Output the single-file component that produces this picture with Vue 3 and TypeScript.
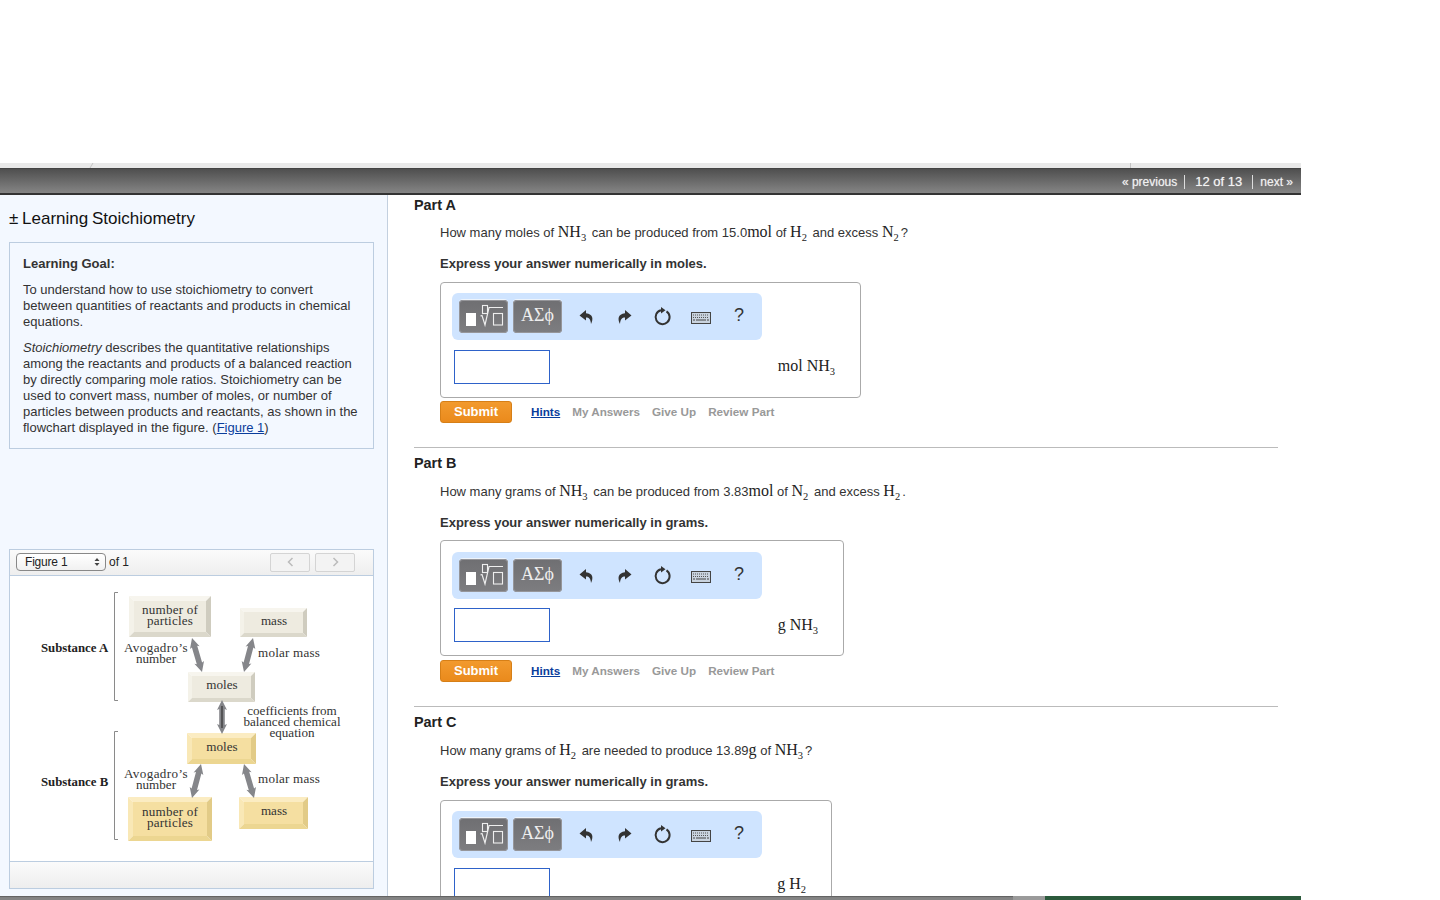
<script setup lang="ts">
// parts of the question, sub numbers are split out for the <sub> tag
const parts = [
  {
    id: "a",
    title: "Part A",
    question: [
      { t: "How many moles of " },
      { m: "NH", s: "3" },
      { t: " can be produced from 15.0" },
      { m: "mol" },
      { t: " of " },
      { m: "H", s: "2" },
      { t: " and excess " },
      { m: "N", s: "2" },
      { t: "?" },
    ],
    express: "Express your answer numerically in moles.",
    unit: "mol NH",
    unitSub: "3",
    actions: true,
  },
  {
    id: "b",
    title: "Part B",
    question: [
      { t: "How many grams of " },
      { m: "NH", s: "3" },
      { t: " can be produced from 3.83" },
      { m: "mol" },
      { t: " of " },
      { m: "N", s: "2" },
      { t: " and excess " },
      { m: "H", s: "2" },
      { t: "." },
    ],
    express: "Express your answer numerically in grams.",
    unit: "g NH",
    unitSub: "3",
    actions: true,
  },
  {
    id: "c",
    title: "Part C",
    question: [
      { t: "How many grams of " },
      { m: "H", s: "2" },
      { t: " are needed to produce 13.89" },
      { m: "g" },
      { t: " of " },
      { m: "NH", s: "3" },
      { t: "?" },
    ],
    express: "Express your answer numerically in grams.",
    unit: "g H",
    unitSub: "2",
    actions: false,
  },
];

const grey = { fill: "#eeebe0", top: "#f7f5ee", left: "#f4f2e9", right: "#cfccbf", bottom: "#dbd8cb" };
const yellow = { fill: "#f5dfa1", top: "#fbecc2", left: "#f9e8b6", right: "#e2cb87", bottom: "#ecd691" };

const boxes = [
  { x: 129, y: 596, w: 82, h: 41, b: 5, c: grey },
  { x: 240, y: 608, w: 67, h: 29, b: 4, c: grey },
  { x: 188, y: 672, w: 67, h: 30, b: 4, c: grey },
  { x: 187, y: 733, w: 69, h: 31, b: 5, c: yellow },
  { x: 128, y: 797, w: 84, h: 44, b: 5, c: yellow },
  { x: 239, y: 797, w: 69, h: 32, b: 5, c: yellow },
].map((r) => {
  const x2 = r.x + r.w;
  const y2 = r.y + r.h;
  const ix = r.x + r.b;
  const iy = r.y + r.b;
  const ix2 = x2 - r.b;
  const iy2 = y2 - r.b;
  return {
    ...r,
    ix,
    iy,
    iw: r.w - r.b * 2,
    ih: r.h - r.b * 2,
    topSide: `${r.x},${r.y} ${x2},${r.y} ${ix2},${iy} ${ix},${iy}`,
    leftSide: `${r.x},${r.y} ${ix},${iy} ${ix},${iy2} ${r.x},${y2}`,
    rightSide: `${x2},${r.y} ${ix2},${iy} ${ix2},${iy2} ${x2},${y2}`,
    bottomSide: `${r.x},${y2} ${ix},${iy2} ${ix2},${iy2} ${x2},${y2}`,
  };
});

// double headed arrow between two points
function arrow(x1: number, y1: number, x2: number, y2: number) {
  const len = Math.hypot(x2 - x1, y2 - y1);
  const ux = (x2 - x1) / len;
  const uy = (y2 - y1) / len;
  const nx = -uy;
  const ny = ux;
  const head = 10;
  const hw = 5;
  const sw = 2.8;
  const pt = (d: number, o: number) =>
    `${(x1 + ux * d + nx * o).toFixed(1)},${(y1 + uy * d + ny * o).toFixed(1)}`;
  return [
    pt(0, 0),
    pt(head, hw),
    pt(head - 1, sw),
    pt(len - head + 1, sw),
    pt(len - head, hw),
    pt(len, 0),
    pt(len - head, -hw),
    pt(len - head + 1, -sw),
    pt(head - 1, -sw),
    pt(head, -hw),
  ].join(" ");
}

const arrows = [
  arrow(192, 638, 202, 672),
  arrow(253, 638, 244, 672),
  arrow(222, 700, 222, 734),
  arrow(201, 764, 192, 798),
  arrow(244, 764, 254, 798),
];

const labels = [
  { x: 170, y: 614, t: "number of", c: "wide" },
  { x: 170, y: 625, t: "particles", c: "wide" },
  { x: 274, y: 625, t: "mass", c: "" },
  { x: 156, y: 652, t: "Avogadro’s", c: "avo" },
  { x: 156, y: 663, t: "number", c: "" },
  { x: 222, y: 689, t: "moles", c: "" },
  { x: 292, y: 715, t: "coefficients from", c: "" },
  { x: 292, y: 726, t: "balanced chemical", c: "" },
  { x: 292, y: 737, t: "equation", c: "" },
  { x: 222, y: 751, t: "moles", c: "" },
  { x: 156, y: 778, t: "Avogadro’s", c: "avo" },
  { x: 156, y: 789, t: "number", c: "" },
  { x: 170, y: 816, t: "number of", c: "wide" },
  { x: 170, y: 827, t: "particles", c: "wide" },
  { x: 274, y: 815, t: "mass", c: "" },
];
</script>

<template>
  <div class="page">
    <div class="frame">
      <div class="strip">
        <i class="tick tick-l"></i>
        <i class="tick tick-r"></i>
      </div>
      <div class="bar">
        <a class="nav-link">« previous</a>
        <span class="nav-count">12 of 13</span>
        <a class="nav-link nav-next">next »</a>
      </div>

      <div class="main">
        <aside class="side">
          <h1 class="side-title">± Learning Stoichiometry</h1>
          <div class="goal">
            <p class="goal-head">Learning Goal:</p>
            <p>To understand how to use stoichiometry to convert between quantities of reactants and products in chemical equations.</p>
            <p><em>Stoichiometry</em> describes the quantitative relationships among the reactants and products of a balanced reaction by directly comparing mole ratios. Stoichiometry can be used to convert mass, number of moles, or number of particles between products and reactants, as shown in the flowchart displayed in the figure. (<a class="fig-link">Figure 1</a>)</p>
          </div>

          <div class="figure">
            <div class="fig-bar">
              <div class="fig-select">
                <span>Figure 1</span>
                <svg width="6" height="10" viewBox="0 0 6 10"><path d="M3 1 5.5 4H.5zM3 9 .5 6h5z" fill="#444" /></svg>
              </div>
              <span class="fig-of">of 1</span>
              <div class="fig-navs">
                <button class="fig-nav">
                  <svg width="7" height="10" viewBox="0 0 7 10"><path d="M5.5 1 1.5 5l4 4" fill="none" stroke="#bbb" stroke-width="1.5" /></svg>
                </button>
                <button class="fig-nav">
                  <svg width="7" height="10" viewBox="0 0 7 10"><path d="M1.5 1l4 4-4 4" fill="none" stroke="#bbb" stroke-width="1.5" /></svg>
                </button>
              </div>
            </div>
            <div class="fig-body">
              <svg class="chart" width="363" height="286" viewBox="10 576 363 286">
                <path d="M118 592.500H114.500V700.500H118M118 731.500H114.500V839.500H118" fill="none" stroke="#8a8a8a" />
                <g v-for="(b, i) in boxes" :key="i">
                  <rect :x="b.ix" :y="b.iy" :width="b.iw" :height="b.ih" :fill="b.c.fill" />
                  <polygon :points="b.topSide" :fill="b.c.top" />
                  <polygon :points="b.leftSide" :fill="b.c.left" />
                  <polygon :points="b.rightSide" :fill="b.c.right" />
                  <polygon :points="b.bottomSide" :fill="b.c.bottom" />
                </g>
                <polygon v-for="(a, i) in arrows" :key="i" :points="a" fill="#85868a" />
                <line x1="222" y1="706" x2="222" y2="728" stroke="#333" stroke-width="1.2" />
                <text v-for="(l, i) in labels" :key="i" class="lbl" :class="l.c" :x="l.x" :y="l.y" text-anchor="middle">{{ l.t }}</text>
                <text class="lbl wide" x="258" y="657">molar mass</text>
                <text class="lbl wide" x="258" y="783">molar mass</text>
                <text class="lbl-b" x="41" y="652">Substance A</text>
                <text class="lbl-b" x="41" y="786">Substance B</text>
              </svg>
            </div>
            <div class="fig-foot"></div>
          </div>
        </aside>

        <section class="content">
          <div v-for="p in parts" :key="p.id" class="part" :class="'part-' + p.id">
            <h2 class="part-title">{{ p.title }}</h2>
            <p class="question">
              <template v-for="(q, i) in p.question" :key="i">
                <span v-if="q.t">{{ q.t }}</span>
                <span v-else class="math" :class="{ 'has-sub': q.s }">{{ q.m }}<sub v-if="q.s">{{ q.s }}</sub></span>
              </template>
            </p>
            <p class="express">{{ p.express }}</p>
            <div class="answer">
              <div class="tools">
                <button class="tool-btn">
                  <svg width="49" height="33" viewBox="0 0 49 33">
                    <rect x="7" y="13" width="10" height="13" fill="#fff" />
                    <rect x="23.500" y="5.500" width="5" height="8" fill="none" stroke="#eee" stroke-width="1.100" />
                    <path d="M21.500 16l1.500-.5 3 9.500 4-17.500h14" fill="none" stroke="#eee" stroke-width="1.200" />
                    <rect x="34.500" y="13.500" width="9" height="11.500" fill="none" stroke="#eee" stroke-width="1.100" />
                  </svg>
                </button>
                <button class="tool-btn tool-sym">ΑΣϕ</button>
                <svg class="tool-ico ico-undo" width="18" height="18" viewBox="0 0 18 18">
                  <path d="M8 2 1.500 7.500 8 12.500V9.500c3 0 4.600 1.500 5 6.500 2.400-4.600 2.400-10-5-10.800z" fill="#333" />
                </svg>
                <svg class="tool-ico ico-redo" width="18" height="18" viewBox="0 0 18 18">
                  <path d="M10 2l6.500 5.500L10 12.500V9.500c-3 0-4.600 1.500-5 6.500C2.600 11.400 2.600 6 10 5.200z" fill="#333" />
                </svg>
                <svg class="tool-ico ico-reload" width="20" height="20" viewBox="0 0 20 20">
                  <path d="M13.500 4.300A7 7 0 1 1 8 3.300" fill="none" stroke="#333" stroke-width="2" />
                  <path d="M8 0v6.600l4.500-3.300z" fill="#333" />
                </svg>
                <svg class="tool-ico ico-keys" width="20" height="12" viewBox="0 0 20 12">
                  <rect x=".5" y=".5" width="19" height="11" fill="#c9d3df" stroke="#444" />
                  <path d="M2 3h16M2 5.500h16" stroke="#555" stroke-dasharray="1 1" />
                  <path d="M2 8h2M5 8h10M16 8h2" stroke="#444" />
                </svg>
                <span class="tool-help">?</span>
              </div>
              <div class="entry">
                <div class="input"></div>
                <span class="unit">{{ p.unit }}<sub>{{ p.unitSub }}</sub></span>
              </div>
            </div>
            <template v-if="p.actions">
              <div class="actions">
                <button class="submit">Submit</button>
                <a class="hint">Hints</a>
                <a class="act">My Answers</a>
                <a class="act">Give Up</a>
                <a class="act">Review Part</a>
              </div>
              <hr class="rule" />
            </template>
          </div>
        </section>
      </div>
      <div class="bottom">
        <div class="bottom-grey"></div>
        <div class="bottom-mid"></div>
        <div class="bottom-green"></div>
      </div>
    </div>
  </div>
</template>

<style>
html,
body {
  margin: 0;
  background: #fff;
  overflow: hidden;
}
</style>

<style scoped>
.page {
  width: 1440px;
  height: 900px;
  overflow: hidden;
  background: #fff;
  padding-top: 163px;
  box-sizing: border-box;
  font-family: "Liberation Sans", Arial, sans-serif;
  color: #333;
}
.frame {
  width: 1301px;
}
.strip {
  height: 5px;
  background: #e9e9e9;
  position: relative;
}
.tick {
  position: absolute;
  bottom: 0;
  width: 1px;
  height: 5px;
  background: #c4c4c4;
}
.tick-l {
  left: 91px;
  transform: skewX(-30deg);
}
.tick-r {
  left: 1130px;
}
.bar {
  height: 27px;
  box-sizing: border-box;
  border-top: 1px solid #444;
  border-bottom: 2px solid #333;
  background: linear-gradient(#4f4f4f, #858585);
  display: flex;
  justify-content: flex-end;
  align-items: center;
  padding: 2px 8px 0 0;
  color: #fff;
  font-size: 12px;
  text-shadow: 0 0 1px rgba(255, 255, 255, 0.6);
}
.nav-link {
  color: #f0f0f0;
}
.nav-count {
  margin: 0 7px;
  padding: 0 10px 0 10px;
  border-left: 1px solid #ddd;
  border-right: 1px solid #ddd;
  line-height: 14px;
  font-size: 13px;
  color: #f4f4f4;
}

.main {
  display: flex;
  height: 701px;
  overflow: hidden;
}
.side {
  flex: none;
  background: #f3f8ff;
  border-right: 1px solid #c3d0df;
  padding: 0 13px 0 9px;
  box-sizing: content-box;
  width: 365px;
}
.side-title {
  margin: 14px 0 13px;
  font-size: 17px;
  line-height: 20px;
  font-weight: 400;
  color: #111;
  word-spacing: -1px;
}
.goal {
  height: 207px;
  box-sizing: border-box;
  border: 1px solid #bccde0;
  padding: 12px 13px 0;
  font-size: 13px;
  line-height: 16px;
}
.goal p {
  margin: 0 0 10px;
}
.goal .goal-head {
  font-weight: 700;
  margin: 0 0 10px;
  padding-top: 1px;
}
.fig-link {
  color: #0a3d9c;
  text-decoration: underline;
}
.figure {
  margin-top: 100px;
  height: 340px;
  box-sizing: border-box;
  border: 1px solid #bccde0;
  display: flex;
  flex-direction: column;
}
.fig-bar {
  height: 26px;
  flex: none;
  box-sizing: border-box;
  border-bottom: 1px solid #bccde0;
  background: linear-gradient(#fbfbfb, #eeeeee);
  display: flex;
  align-items: center;
  padding: 0 18px 1px 6px;
  font-size: 12px;
  color: #222;
}
.fig-select {
  width: 90px;
  height: 18px;
  box-sizing: border-box;
  border: 1px solid #888;
  border-radius: 4px;
  background: linear-gradient(#fff, #f1f1f1);
  display: flex;
  align-items: center;
  justify-content: space-between;
  padding: 0 5px 0 8px;
  letter-spacing: -0.2px;
}
.fig-of {
  margin-left: 3px;
}
.fig-navs {
  margin-left: auto;
  display: flex;
  gap: 5px;
}
.fig-nav {
  width: 40px;
  height: 19px;
  padding: 0;
  border: 1px solid #d4d4d4;
  border-radius: 2px;
  background: #f3f3f3;
  display: flex;
  align-items: center;
  justify-content: center;
}
.fig-body {
  flex: 1;
  background: #fff;
  overflow: hidden;
}
.chart {
  display: block;
}
.lbl {
  font-family: "Liberation Serif", serif;
  font-size: 13.1px;
  fill: #333;
}
.lbl.wide {
  letter-spacing: 0.2px;
}
.lbl.avo {
  letter-spacing: 0.4px;
}
.lbl-b {
  font-family: "Liberation Serif", serif;
  font-size: 12.8px;
  font-weight: 700;
  fill: #222;
}
.fig-foot {
  height: 26px;
  flex: none;
  border-top: 1px solid #bccde0;
  background: linear-gradient(#fbfbfb, #eeeeee);
}

.content {
  flex: 1;
  padding: 2px 23px 0 26px;
  min-width: 0;
}
.part-title {
  margin: 0;
  font-size: 14.4px;
  line-height: 16px;
  font-weight: 700;
  color: #222;
}
.question {
  margin: 11px 0 0 26px;
  font-size: 13px;
  line-height: 16px;
  white-space: nowrap;
}
.part-b .question,
.part-c .question {
  margin-top: 12px;
}
.math {
  font-family: "Liberation Serif", serif;
  font-size: 16px;
  color: #222;
}
.math.has-sub {
  padding-right: 2px;
}
.math sub,
.unit sub {
  font-size: 10.5px;
  line-height: 0;
}
.express {
  margin: 15px 0 0 26px;
  font-size: 13px;
  line-height: 16px;
  font-weight: 700;
}
.answer {
  margin: 10px 0 0 26px;
  height: 116px;
  box-sizing: border-box;
  border: 1px solid #aaa;
  border-radius: 4px;
  padding: 10px 0 0 11px;
}
.part-a .answer {
  width: 421px;
}
.part-b .answer {
  width: 404px;
  margin-top: 9px;
  padding-top: 11px;
}
.part-c .answer {
  width: 392px;
}
.tools {
  width: 310px;
  height: 47px;
  box-sizing: border-box;
  background: #cfe4ff;
  border-radius: 6px;
  display: flex;
  align-items: center;
  padding-left: 7px;
}
.tool-btn {
  width: 49px;
  height: 33px;
  padding: 0;
  border: 0;
  border-radius: 4px;
  background: linear-gradient(#6f6f72, #7d7d80);
  box-shadow: 0 -1px 0 #eef4fb, inset 0 0 0 1px #96969a;
  color: #eee;
  display: flex;
  align-items: center;
  justify-content: center;
}
.tool-sym {
  margin-left: 5px;
  font-family: "Liberation Serif", serif;
  font-size: 18px;
  padding-bottom: 3px;
}
.tool-ico {
  flex: none;
}
.ico-undo {
  margin-left: 16px;
}
.ico-redo {
  margin-left: 19px;
}
.ico-reload {
  margin-left: 20px;
}
.ico-keys {
  margin-left: 18px;
  margin-top: 3px;
}
.tool-help {
  margin-left: 23px;
  font-size: 18px;
  color: #333;
  padding-bottom: 3px;
}
.entry {
  margin: 10px 0 0 2px;
  display: flex;
  justify-content: space-between;
  align-items: flex-start;
  padding-right: 25px;
}
.part-b .entry {
  margin-top: 9px;
}
.input {
  width: 96px;
  height: 34px;
  box-sizing: border-box;
  border: 1px solid #2e62c9;
  background: #fff;
}
.unit {
  font-family: "Liberation Serif", serif;
  font-size: 16px;
  line-height: 18px;
  margin-top: 7px;
  color: #222;
}
.part-b .unit {
  margin-top: 8px;
}
.actions {
  margin: 2px 0 0 26px;
  height: 23px;
  display: flex;
  align-items: center;
  font-size: 11.7px;
  font-weight: 700;
}
.part-b .actions {
  margin-top: 3px;
}
.submit {
  width: 72px;
  height: 22px;
  padding: 0;
  border: 1px solid #d67f17;
  border-radius: 3px;
  background: linear-gradient(#f29a2e, #ea8a1c);
  color: #fff;
  font: 700 13px "Liberation Sans", Arial, sans-serif;
  margin-right: 19px;
}
.hint {
  color: #0a3d9c;
  text-decoration: underline;
  margin-right: 12px;
}
.act {
  color: #999;
  margin-right: 12px;
}
.rule {
  margin: 24px 0 7px;
  border: 0;
  border-top: 1px solid #bbb;
  height: 0;
}
.bottom {
  height: 4px;
  display: flex;
}
.bottom-grey {
  width: 1013px;
  background: linear-gradient(#555, #848484 40%);
}
.bottom-mid {
  width: 32px;
  background: #9a9a9a;
}
.bottom-green {
  flex: 1;
  background: #2c5a3c;
}
</style>
